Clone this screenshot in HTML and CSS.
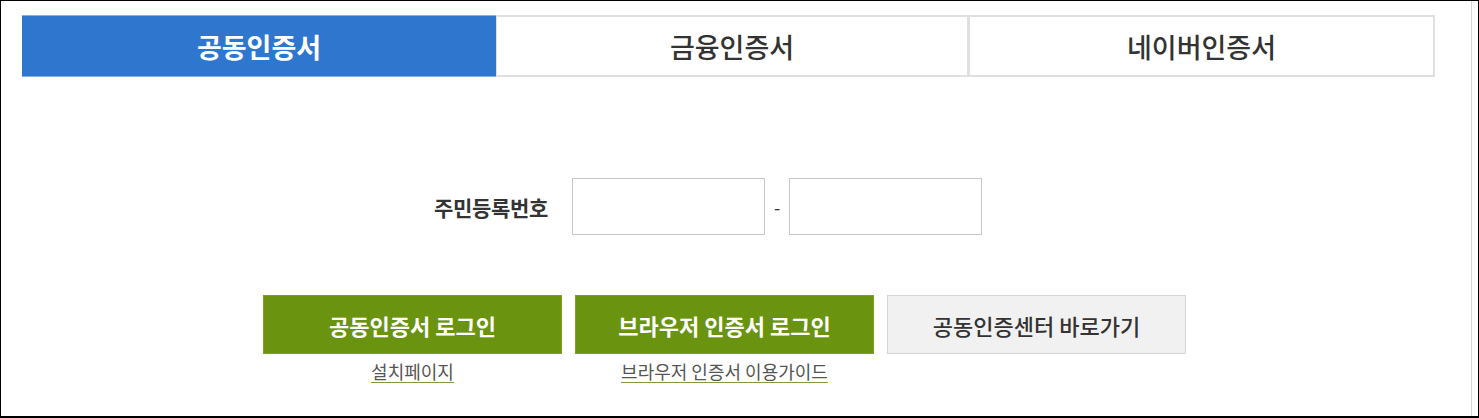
FILE: index.html
```html
<!DOCTYPE html>
<html>
<head>
    <meta charset="utf-8">
    <link rel="stylesheet" href="styles.css">
</head>
<body>
    <div class="frame">
        <div class="inner">
            <ul class="tabs">
                <li class="tab active">공동인증서</li>
                <li class="tab">금융인증서</li>
                <li class="tab">네이버인증서</li>
            </ul>

            <div class="form-row">
                <label class="form-label" for="jumin1">주민등록번호</label>
                <input type="text" id="jumin1" class="jumin-input">
                <span class="dash">-</span>
                <input type="password" id="jumin2" class="jumin-input">
            </div>

            <div class="actions">
                <div class="action">
                    <button class="btn btn-green">공동인증서 로그인</button>
                    <a href="#" class="guide-link">설치페이지</a>
                </div>
                <div class="action">
                    <button class="btn btn-green">브라우저 인증서 로그인</button>
                    <a href="#" class="guide-link">브라우저 인증서 이용가이드</a>
                </div>
                <div class="action">
                    <button class="btn btn-gray">공동인증센터 바로가기</button>
                </div>
            </div>
        </div>
    </div>
</body>
</html>
```

FILE: styles.css
```css
html, body {
    margin: 0;
    padding: 0;
    background: #ffffff;
}

body {
    font-family: "Noto Sans CJK KR", "Noto Sans", sans-serif;
    color: #333;
}

.frame {
    width: 1479px;
    height: 418px;
    box-sizing: border-box;
    border: 1px solid #000;
    border-bottom-width: 2px;
}

.inner {
    width: 1471px;
    height: 100%;
    box-sizing: border-box;
    border-right: 1px solid #d6d6d6;
    padding: 14px 0 0 21px;
}

/* tabs */
.tabs {
    display: flex;
    list-style: none;
    margin: 0;
    padding: 0;
    width: 1413px;
}

.tab {
    flex: 0 0 473px;
    height: 62px;
    box-sizing: border-box;
    border: 2px solid #e0e0e0;
    border-left-width: 1px;
    display: flex;
    align-items: center;
    justify-content: center;
    font-size: 27px;
    font-weight: 500;
    color: #333;
    line-height: 1;
}

.tab:last-child {
    flex: 1;
}

.tab.active {
    flex-basis: 474px;
    background: #2f76cf;
    border: 1px solid #86aee3;
    border-left: none;
    border-right: none;
    color: #fff;
    font-weight: 700;
}

/* resident number */
.form-row {
    display: flex;
    align-items: center;
    margin-top: 101px;
    padding-left: 412px;
    height: 57px;
}

.form-label {
    font-size: 21px;
    font-weight: 700;
    color: #333;
    margin-right: 24px;
    letter-spacing: -0.3px;
}

.jumin-input {
    width: 193px;
    height: 57px;
    box-sizing: border-box;
    border: 1px solid #c8c8c8;
    padding: 0 8px;
    font-size: 16px;
    outline: none;
}

.dash {
    width: 24px;
    text-align: center;
    font-size: 18px;
    color: #333;
}

/* buttons */
.actions {
    display: flex;
    gap: 13px;
    margin-top: 60px;
    padding-left: 241px;
}

.action {
    display: flex;
    flex-direction: column;
    align-items: center;
    width: 299px;
}

.btn {
    width: 299px;
    height: 59px;
    box-sizing: border-box;
    font-family: inherit;
    font-size: 22px;
    cursor: pointer;
    padding: 0;
}

.btn-green {
    background: #6a930f;
    border: 1px solid #7ea02b;
    color: #fff;
    font-weight: 700;
}

.btn-gray {
    background: #f1f1f1;
    border: 1px solid #d6d6d6;
    color: #333;
    font-weight: 500;
}

.guide-link {
    margin-top: 6px;
    font-size: 18px;
    color: #555;
    text-decoration: underline;
    text-decoration-color: #7d9a3c;
    text-underline-offset: 3px;
    line-height: 22px;
}
```
